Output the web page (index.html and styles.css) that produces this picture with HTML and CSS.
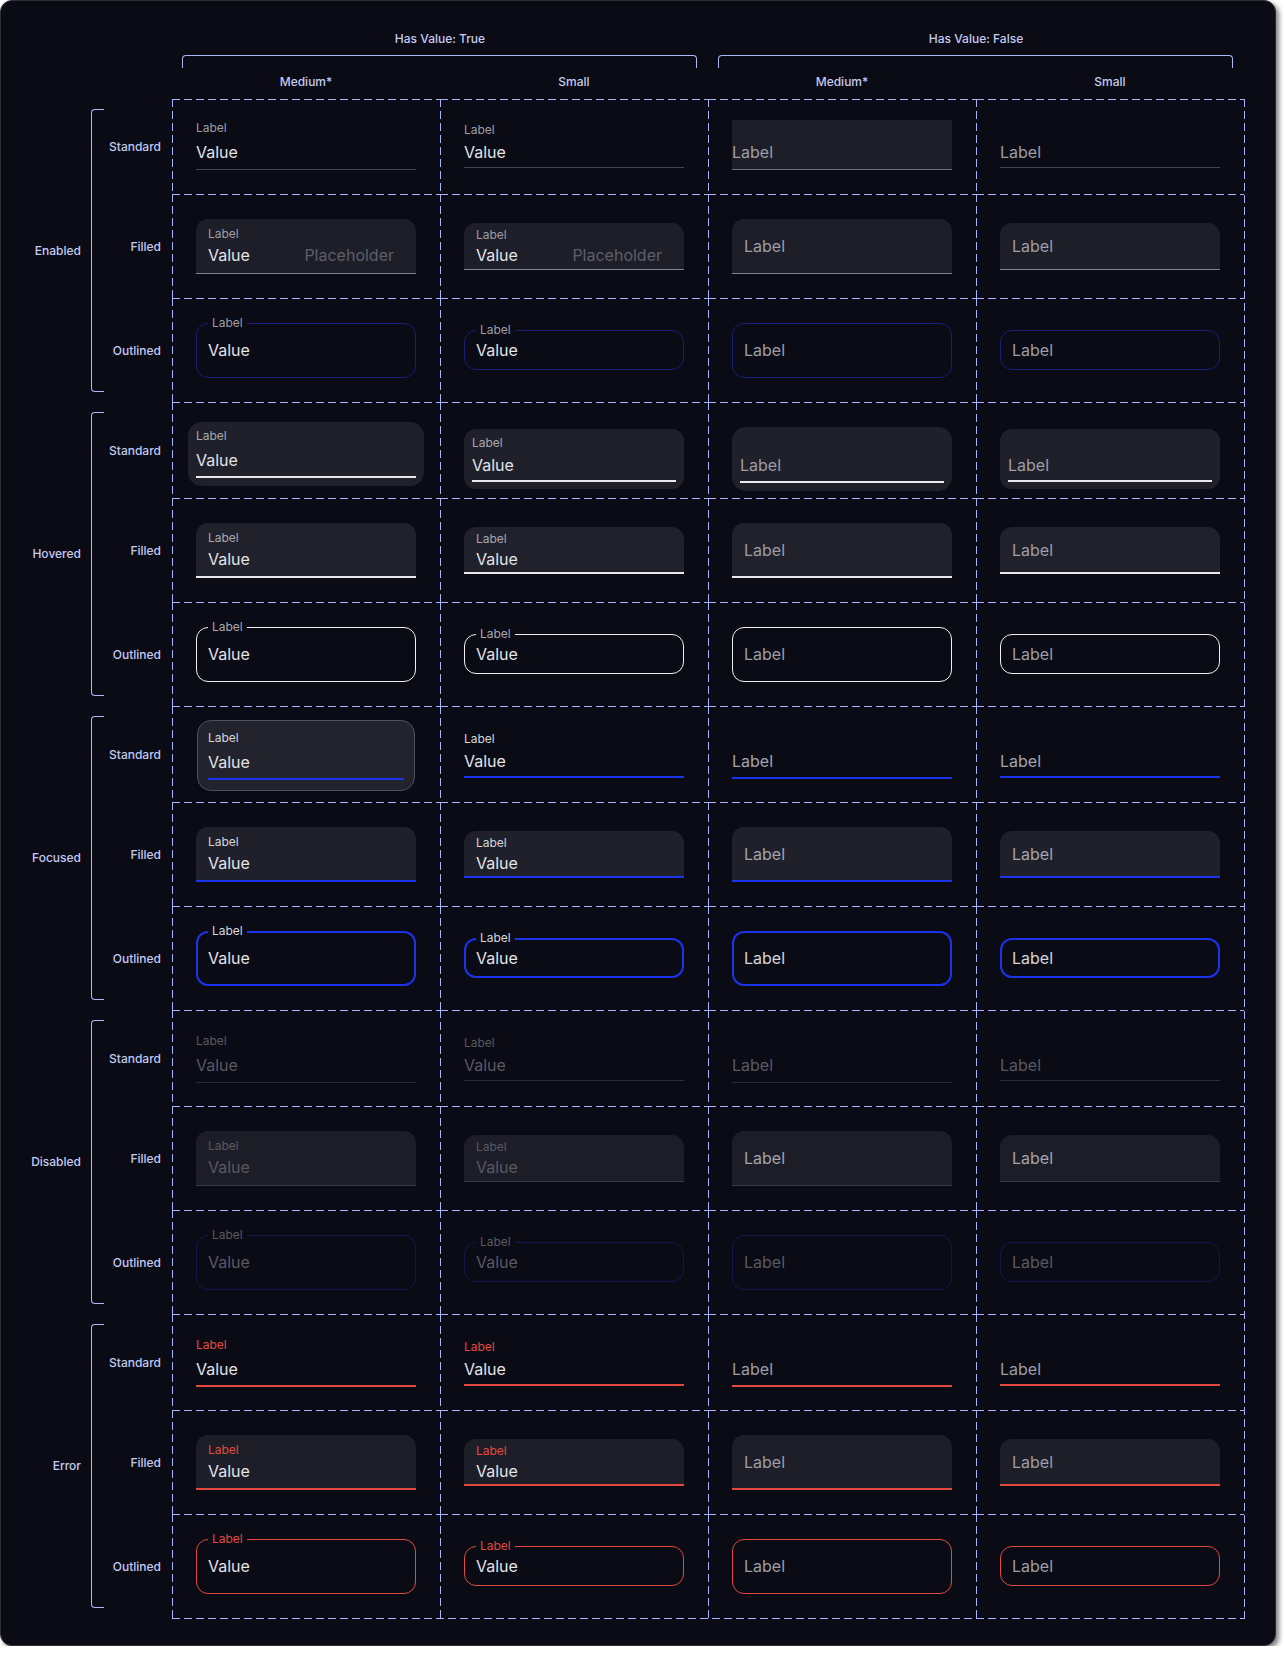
FILE: index.html
```html
<!DOCTYPE html>
<html lang="en">
<head>
    <meta charset="UTF-8">
    <meta name="viewport" content="width=device-width, initial-scale=1.0">
    <title>Text Field States</title>
    <link rel="stylesheet" href="styles.css">
</head>
<body>
    <div class="sheet">
        <!-- column headers -->
        <div class="col-heads">
            <div class="col-group">
                <div class="col-title">Has Value: True</div>
                <div class="col-bracket"></div>
                <div class="col-names"><span>Medium*</span><span>Small</span></div>
            </div>
            <div class="col-group">
                <div class="col-title">Has Value: False</div>
                <div class="col-bracket"></div>
                <div class="col-names"><span>Medium*</span><span>Small</span></div>
            </div>
        </div>

        <div class="body">
            <!-- row labels -->
            <div class="labels">
                <div class="group first">
                    <div class="group-name">Enabled</div>
                    <div class="brace"></div>
                    <div class="row-names">
                        <div class="row-name std-h">Standard</div>
                        <div class="row-name">Filled</div>
                        <div class="row-name">Outlined</div>
                    </div>
                </div>
                <div class="group">
                    <div class="group-name">Hovered</div>
                    <div class="brace"></div>
                    <div class="row-names">
                        <div class="row-name std-h">Standard</div>
                        <div class="row-name">Filled</div>
                        <div class="row-name">Outlined</div>
                    </div>
                </div>
                <div class="group">
                    <div class="group-name">Focused</div>
                    <div class="brace"></div>
                    <div class="row-names">
                        <div class="row-name std-h">Standard</div>
                        <div class="row-name">Filled</div>
                        <div class="row-name">Outlined</div>
                    </div>
                </div>
                <div class="group">
                    <div class="group-name">Disabled</div>
                    <div class="brace"></div>
                    <div class="row-names">
                        <div class="row-name std-h">Standard</div>
                        <div class="row-name">Filled</div>
                        <div class="row-name">Outlined</div>
                    </div>
                </div>
                <div class="group">
                    <div class="group-name">Error</div>
                    <div class="brace"></div>
                    <div class="row-names">
                        <div class="row-name std-h">Standard</div>
                        <div class="row-name">Filled</div>
                        <div class="row-name">Outlined</div>
                    </div>
                </div>
            </div>

            <!-- dashed grid of fields -->
            <div class="grid">
                <!-- Enabled -->
                <div class="band st-enabled">
                    <div class="cell top"><div class="tf std"><div class="tf-label">Label</div><div class="tf-value">Value</div></div></div>
                    <div class="cell top"><div class="tf std sm"><div class="tf-label">Label</div><div class="tf-value">Value</div></div></div>
                    <div class="cell top"><div class="tf std empty shade"><div class="tf-value">Label</div></div></div>
                    <div class="cell top"><div class="tf std sm empty"><div class="tf-value">Label</div></div></div>

                    <div class="cell"><div class="tf fill"><div class="tf-label">Label</div><div class="tf-value">Value<span class="tf-ph">Placeholder</span></div></div></div>
                    <div class="cell"><div class="tf fill sm"><div class="tf-label">Label</div><div class="tf-value">Value<span class="tf-ph">Placeholder</span></div></div></div>
                    <div class="cell"><div class="tf fill empty"><div class="tf-value">Label</div></div></div>
                    <div class="cell"><div class="tf fill sm empty"><div class="tf-value">Label</div></div></div>

                    <div class="cell"><div class="tf out"><span class="tf-notch">Label</span><div class="tf-value">Value</div></div></div>
                    <div class="cell"><div class="tf out sm"><span class="tf-notch">Label</span><div class="tf-value">Value</div></div></div>
                    <div class="cell"><div class="tf out empty"><div class="tf-value">Label</div></div></div>
                    <div class="cell"><div class="tf out sm empty"><div class="tf-value">Label</div></div></div>
                </div>

                <!-- Hovered -->
                <div class="band st-hover thick">
                    <div class="cell"><div class="hbox wide lift-a"><div class="tf std"><div class="tf-label">Label</div><div class="tf-value">Value</div></div></div></div>
                    <div class="cell"><div class="hbox sm-box lift-b"><div class="tf std sm"><div class="tf-label">Label</div><div class="tf-value">Value</div></div></div></div>
                    <div class="cell"><div class="hbox lift-b"><div class="tf std empty"><div class="tf-value">Label</div></div></div></div>
                    <div class="cell"><div class="hbox sm-box lift-b"><div class="tf std sm empty"><div class="tf-value">Label</div></div></div></div>

                    <div class="cell"><div class="tf fill"><div class="tf-label">Label</div><div class="tf-value">Value</div></div></div>
                    <div class="cell"><div class="tf fill sm"><div class="tf-label">Label</div><div class="tf-value">Value</div></div></div>
                    <div class="cell"><div class="tf fill empty"><div class="tf-value">Label</div></div></div>
                    <div class="cell"><div class="tf fill sm empty"><div class="tf-value">Label</div></div></div>

                    <div class="cell"><div class="tf out"><span class="tf-notch">Label</span><div class="tf-value">Value</div></div></div>
                    <div class="cell"><div class="tf out sm"><span class="tf-notch">Label</span><div class="tf-value">Value</div></div></div>
                    <div class="cell"><div class="tf out empty"><div class="tf-value">Label</div></div></div>
                    <div class="cell"><div class="tf out sm empty"><div class="tf-value">Label</div></div></div>
                </div>

                <!-- Focused -->
                <div class="band st-focus thick">
                    <div class="cell"><div class="fbox lift-c"><div class="tf std"><div class="tf-label">Label</div><div class="tf-value">Value</div></div></div></div>
                    <div class="cell"><div class="tf std sm"><div class="tf-label">Label</div><div class="tf-value">Value</div></div></div>
                    <div class="cell"><div class="tf std empty"><div class="tf-value">Label</div></div></div>
                    <div class="cell"><div class="tf std sm empty"><div class="tf-value">Label</div></div></div>

                    <div class="cell"><div class="tf fill"><div class="tf-label">Label</div><div class="tf-value">Value</div></div></div>
                    <div class="cell"><div class="tf fill sm"><div class="tf-label">Label</div><div class="tf-value">Value</div></div></div>
                    <div class="cell"><div class="tf fill empty"><div class="tf-value">Label</div></div></div>
                    <div class="cell"><div class="tf fill sm empty"><div class="tf-value">Label</div></div></div>

                    <div class="cell"><div class="tf out"><span class="tf-notch">Label</span><div class="tf-value">Value</div></div></div>
                    <div class="cell"><div class="tf out sm"><span class="tf-notch">Label</span><div class="tf-value">Value</div></div></div>
                    <div class="cell"><div class="tf out empty"><div class="tf-value">Label</div></div></div>
                    <div class="cell"><div class="tf out sm empty"><div class="tf-value">Label</div></div></div>
                </div>

                <!-- Disabled -->
                <div class="band st-disabled">
                    <div class="cell"><div class="tf std"><div class="tf-label">Label</div><div class="tf-value">Value</div></div></div>
                    <div class="cell"><div class="tf std sm"><div class="tf-label">Label</div><div class="tf-value">Value</div></div></div>
                    <div class="cell"><div class="tf std empty"><div class="tf-value">Label</div></div></div>
                    <div class="cell"><div class="tf std sm empty"><div class="tf-value">Label</div></div></div>

                    <div class="cell"><div class="tf fill"><div class="tf-label">Label</div><div class="tf-value">Value</div></div></div>
                    <div class="cell"><div class="tf fill sm"><div class="tf-label">Label</div><div class="tf-value">Value</div></div></div>
                    <div class="cell"><div class="tf fill empty"><div class="tf-value">Label</div></div></div>
                    <div class="cell"><div class="tf fill sm empty"><div class="tf-value">Label</div></div></div>

                    <div class="cell"><div class="tf out"><span class="tf-notch">Label</span><div class="tf-value">Value</div></div></div>
                    <div class="cell"><div class="tf out sm"><span class="tf-notch">Label</span><div class="tf-value">Value</div></div></div>
                    <div class="cell"><div class="tf out empty"><div class="tf-value">Label</div></div></div>
                    <div class="cell"><div class="tf out sm empty"><div class="tf-value">Label</div></div></div>
                </div>

                <!-- Error -->
                <div class="band st-error thick">
                    <div class="cell"><div class="tf std"><div class="tf-label">Label</div><div class="tf-value">Value</div></div></div>
                    <div class="cell"><div class="tf std sm"><div class="tf-label">Label</div><div class="tf-value">Value</div></div></div>
                    <div class="cell"><div class="tf std empty"><div class="tf-value">Label</div></div></div>
                    <div class="cell"><div class="tf std sm empty"><div class="tf-value">Label</div></div></div>

                    <div class="cell"><div class="tf fill"><div class="tf-label">Label</div><div class="tf-value">Value</div></div></div>
                    <div class="cell"><div class="tf fill sm"><div class="tf-label">Label</div><div class="tf-value">Value</div></div></div>
                    <div class="cell"><div class="tf fill empty"><div class="tf-value">Label</div></div></div>
                    <div class="cell"><div class="tf fill sm empty"><div class="tf-value">Label</div></div></div>

                    <div class="cell"><div class="tf out"><span class="tf-notch">Label</span><div class="tf-value">Value</div></div></div>
                    <div class="cell"><div class="tf out sm"><span class="tf-notch">Label</span><div class="tf-value">Value</div></div></div>
                    <div class="cell"><div class="tf out empty"><div class="tf-value">Label</div></div></div>
                    <div class="cell"><div class="tf out sm empty"><div class="tf-value">Label</div></div></div>
                </div>
            </div>
        </div>
    </div>
</body>
</html>
```

FILE: styles.css
```css
body {
    margin: 0;
    background-color: #ffffff;
    font-family: Inter, 'Noto Sans', sans-serif;
}

/* 整个画板 */
.sheet {
    width: 1276px;
    box-sizing: border-box;
    padding-bottom: 26px;
    background-color: #0a0b14;
    border: 1px solid #2e2f34;
    border-radius: 12px;
    box-shadow: 3px 3px 5px rgba(0, 0, 0, 0.5);
}

/* 列标题 */
.col-heads {
    display: flex;
    margin-left: 171px;
    padding-top: 30px;
    margin-bottom: 9px;
}
.col-group {
    width: 536px;
}
.col-title {
    font-size: 12px;
    line-height: 16px;
    font-weight: 500;
    color: #c4caf2;
    text-align: center;
}
.col-bracket {
    height: 12px;
    margin: 8px 11px 0 10px;
    border: 1px solid #aeb9f6;
    border-bottom: none;
    border-radius: 4px 4px 0 0;
}
.col-names {
    display: flex;
    margin-top: 6px;
}
.col-names span {
    flex: 1;
    text-align: center;
    font-size: 12px;
    line-height: 16px;
    font-weight: 500;
    color: #c4caf2;
}

.body {
    display: flex;
}

/* 行标题 */
.labels {
    width: 171px;
}
.group {
    display: flex;
    height: 304px;
}
.group.first {
    height: 303px;
}
.group-name {
    width: 80px;
    align-self: center;
    text-align: right;
    font-size: 12px;
    line-height: 16px;
    font-weight: 500;
    color: #c4caf2;
}
.brace {
    width: 12px;
    margin: 10px 0 10px 10px;
    border: 1px solid #aeb9f6;
    border-right: none;
    border-radius: 4px 0 0 4px;
}
.row-names {
    width: 57px;
    display: flex;
    flex-direction: column;
}
.row-name {
    height: 104px;
    display: flex;
    align-items: center;
    justify-content: flex-end;
    font-size: 12px;
    font-weight: 500;
    color: #c4caf2;
}
.row-name.std-h {
    height: 96px;
}
.group.first .row-name.std-h {
    height: 95px;
}

/* 虚线网格 */
.grid {
    display: grid;
    grid-template-columns: repeat(4, 268px);
    grid-template-rows: 95px 104px 104px repeat(4, 96px 104px 104px);
    padding: 0 1px 1px 0;
    background-image:
        repeating-linear-gradient(180deg, #a7b4fb 0 8px, transparent 8px 12px),
        repeating-linear-gradient(90deg, #a7b4fb 0 8px, transparent 8px 12px);
    background-size: 1px 100%, 100% 1px;
    background-position: right top, left bottom;
    background-repeat: no-repeat;
}
.band {
    display: contents;
}
.cell {
    display: flex;
    flex-direction: column;
    align-items: center;
    justify-content: center;
    background-image:
        repeating-linear-gradient(90deg, #a7b4fb 0 8px, transparent 8px 12px),
        repeating-linear-gradient(180deg, #a7b4fb 0 8px, transparent 8px 12px);
    background-size: 100% 1px, 1px 100%;
    background-position: left top, left top;
    background-repeat: no-repeat;
}
.cell.top {
    padding-bottom: 3px;
}

/* 文本框基础 */
.tf {
    width: 220px;
    box-sizing: border-box;
    display: flex;
    flex-direction: column;
}
.tf-label {
    font-size: 12px;
    line-height: 16px;
    color: #9c9da7;
}
.tf-value {
    display: flex;
    justify-content: space-between;
    font-size: 16px;
    line-height: 24px;
    color: #e3e3e8;
}
.tf.empty .tf-value {
    color: #9c9da7;
}
.tf-ph {
    margin-right: 10px;
    color: #5e5f69;
}

/* Standard */
.std {
    border-bottom: 1px solid #42434d;
    padding-bottom: 5px;
}
.std .tf-label {
    margin-bottom: 4px;
}
.std.sm {
    padding-bottom: 3px;
}
.std.sm .tf-label {
    margin-bottom: 2px;
}
.std.empty {
    padding-top: 20px;
}
.std.sm.empty {
    padding-top: 18px;
}
.std.shade {
    background-color: #1d1e28;
    border-bottom-color: #6e6f79;
}

/* Filled */
.fill {
    background-color: #1d1e28;
    border-radius: 12px 12px 0 0;
    border-bottom: 1px solid #83848e;
    padding: 7px 12px 6px;
}
.fill .tf-label {
    margin-bottom: 1px;
}
.fill.sm {
    padding: 4px 12px 2px;
}
.fill.sm .tf-label {
    margin-bottom: 0;
}
.fill.empty {
    padding: 15px 12px;
}
.fill.sm.empty {
    padding: 11px 12px;
}

/* Outlined */
.out {
    position: relative;
    height: 55px;
    justify-content: center;
    padding: 0 11px;
    border: 1px solid #181d7a;
    border-radius: 12px;
}
.out.sm {
    height: 40px;
}
.tf-notch {
    position: absolute;
    top: -9px;
    left: 11px;
    padding: 0 4px;
    font-size: 12px;
    line-height: 16px;
    color: #9c9da7;
    background-color: #0a0b14;
}

/* 粗下划线状态 */
.thick .std {
    border-bottom-width: 2px;
    padding-bottom: 4px;
}
.thick .std.sm {
    padding-bottom: 3px;
}
.thick .fill {
    border-bottom-width: 2px;
    padding-bottom: 5px;
}
.thick .fill.sm {
    padding-bottom: 1px;
}
.thick .fill.empty {
    padding-bottom: 14px;
}
.thick .fill.sm.empty {
    padding-bottom: 10px;
}

/* 悬停盒子 */
.hbox {
    width: 220px;
    box-sizing: border-box;
    padding: 6px 8px 8px;
    background-color: #1f202a;
    border-radius: 14px;
}
.hbox.wide {
    width: 236px;
}
.hbox.sm-box {
    padding-bottom: 7px;
    border-radius: 12px;
}
.hbox .tf,
.fbox .tf {
    width: auto;
}
.lift-a {
    margin-top: 8px;
}
.lift-b {
    margin-top: 18px;
}
.lift-c {
    margin-top: 3px;
}

/* 聚焦盒子 */
.fbox {
    width: 218px;
    box-sizing: border-box;
    padding: 9px 10px 10px;
    background-color: #22232d;
    border: 1px solid #4f505a;
    border-radius: 14px;
}

/* Hovered */
.st-hover .std,
.st-hover .fill {
    border-bottom-color: #e8e8ed;
}
.st-hover .fill {
    background-color: #20212b;
}
.st-hover .out {
    border-color: #f0f0f3;
}
.st-hover .tf-label,
.st-hover .tf-notch {
    color: #a7a8b2;
}

/* Focused */
.st-focus .std,
.st-focus .fill {
    border-bottom-color: #1b33ea;
}
.st-focus .fill {
    background-color: #1f202a;
}
.st-focus .out {
    border: 2px solid #1b33ea;
    padding: 0 10px;
}
.st-focus .out .tf-notch {
    top: -10px;
    left: 10px;
}
.st-focus .tf-label,
.st-focus .tf-notch {
    color: #d5d6dd;
}
.st-focus .tf.empty .tf-value {
    color: #a3a4ae;
}
.st-focus .out.empty .tf-value {
    color: #d5d6dd;
}

/* Disabled */
.st-disabled .tf-label,
.st-disabled .tf-notch,
.st-disabled .tf-value,
.st-disabled .tf.empty .tf-value {
    color: #585963;
}
.st-disabled .std {
    border-bottom-color: #2a2b35;
}
.st-disabled .fill {
    background-color: #1c1d27;
    border-bottom-color: #3a3b45;
}
.st-disabled .fill.empty .tf-value {
    color: #a3a4ae;
}
.st-disabled .out {
    border-color: #13174f;
}

/* Error */
.st-error .tf-label,
.st-error .tf-notch {
    color: #e2493f;
}
.st-error .std,
.st-error .fill {
    border-bottom-color: #e2493f;
}
.st-error .out {
    border-color: #e2493f;
}
```
